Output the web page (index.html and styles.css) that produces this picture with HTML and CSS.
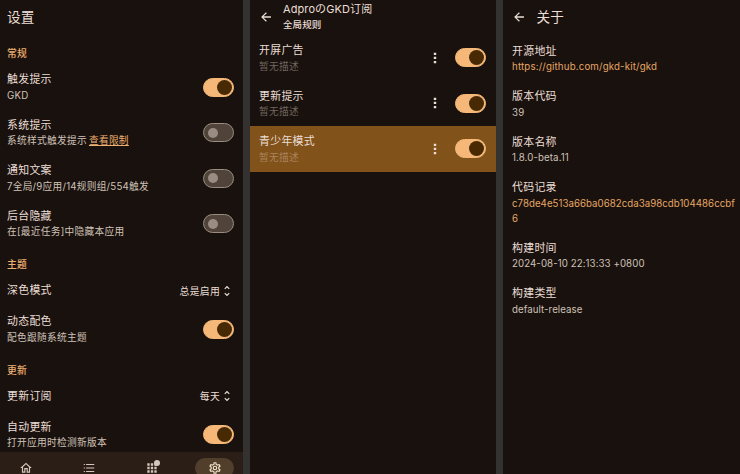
FILE: index.html
```html
<!DOCTYPE html>
<html lang="zh-CN">
<head>
<meta charset="utf-8">
<title>GKD</title>
<link rel="stylesheet" href="styles.css">
</head>
<body>
<svg class="defs" aria-hidden="true">
  <symbol id="back" viewBox="0 0 24 24"><path d="M20.5 10.8H7.8l5.6-5.4L12 3.7 3.7 12l8.3 8.3 1.4-1.7-5.6-5.4h12.7z"/></symbol>
  <symbol id="more" viewBox="0 0 4 12"><path d="M.8.7h2.4v2.3H.8zM.8 4.8h2.4v2.3H.8zM.8 8.9h2.4v2.3H.8z"/></symbol>
  <symbol id="unfold" viewBox="0 0 24 24"><path d="M12 5.83 15.17 9l1.41-1.41L12 3 7.41 7.59 8.83 9zm0 12.34L8.83 15l-1.41 1.41L12 21l4.59-4.59L15.17 15z"/></symbol>
  <symbol id="home" viewBox="0 0 24 24"><path d="m12 5.69 5 4.5V18h-2v-6H9v6H7v-7.81zM12 3 2 12h3v8h6v-6h2v6h6v-8h3z"/></symbol>
  <symbol id="list" viewBox="0 0 24 24"><path d="M3 5h2v2H3zm0 6h2v2H3zm0 6h2v2H3zM7 5h14v2H7zm0 6h14v2H7zm0 6h14v2H7z"/></symbol>
  <symbol id="apps" viewBox="0 0 24 24"><path d="M4 4h4v4H4zm6 0h4v4h-4zm6 0h4v4h-4zM4 10h4v4H4zm6 0h4v4h-4zm6 0h4v4h-4zM4 16h4v4H4zm6 0h4v4h-4zm6 0h4v4h-4z"/></symbol>
  <symbol id="gear" viewBox="0 0 24 24"><path d="M19.43 12.98c.04-.32.07-.64.07-.98s-.03-.66-.07-.98l2.11-1.65c.19-.15.24-.42.12-.64l-2-3.46c-.09-.16-.26-.25-.44-.25-.06 0-.12.01-.17.03l-2.49 1c-.52-.4-1.08-.73-1.69-.98l-.38-2.65C14.46 2.18 14.25 2 14 2h-4c-.25 0-.46.18-.49.42l-.38 2.65c-.61.25-1.17.59-1.69.98l-2.49-1c-.06-.02-.12-.03-.18-.03-.17 0-.34.09-.43.25l-2 3.46c-.13.22-.07.49.12.64l2.11 1.65c-.04.32-.07.65-.07.98s.03.66.07.98l-2.11 1.65c-.19.15-.24.42-.12.64l2 3.46c.09.16.26.25.44.25.06 0 .12-.01.17-.03l2.49-1c.52.4 1.08.73 1.69.98l.38 2.65c.03.24.24.42.49.42h4c.25 0 .46-.18.49-.42l.38-2.65c.61-.25 1.17-.59 1.69-.98l2.49 1c.06.02.12.03.18.03.17 0 .34-.09.43-.25l2-3.46c.12-.22.07-.49-.12-.64zm-1.98-1.71c.04.31.05.52.05.73s-.02.43-.05.73l-.14 1.13.89.7 1.08.84-.7 1.21-1.27-.51-1.04-.42-.9.68c-.43.32-.84.56-1.25.73l-1.06.43-.16 1.13-.2 1.35h-1.4l-.35-2.48-1.06-.43c-.43-.18-.83-.41-1.23-.71l-.91-.7-1.06.43-1.27.51-.7-1.21 1.97-1.54-.14-1.13c-.03-.31-.05-.54-.05-.74s.02-.43.05-.73l.14-1.13-1.97-1.54.7-1.21 1.27.51 1.04.42.9-.68c.43-.32.84-.56 1.25-.73l1.06-.43.36-2.48h1.39l.35 2.48 1.06.43c.43.18.83.41 1.23.71l.91.7 1.06-.43 1.27-.51.7 1.21-1.96 1.54zM12 8a4 4 0 1 0 0 8 4 4 0 0 0 0-8zm0 6a2 2 0 1 1 0-4 2 2 0 0 1 0 4z"/></symbol>
</svg>
<main class="screens">
  <section class="screen settings">
    <header class="bar"><h1>设置</h1></header>
    <div class="content">
      <h2>常规</h2>
      <div class="row"><div class="text"><p class="name">触发提示</p><p class="desc">GKD</p></div><span class="switch on"></span></div>
      <div class="row"><div class="text"><p class="name">系统提示</p><p class="desc">系统样式触发提示<a class="limit">查看限制</a></p></div><span class="switch"></span></div>
      <div class="row"><div class="text"><p class="name">通知文案</p><p class="desc stats">7全局/9应用/14规则组/554触发</p></div><span class="switch"></span></div>
      <div class="row"><div class="text"><p class="name">后台隐藏</p><p class="desc">在[最近任务]中隐藏本应用</p></div><span class="switch"></span></div>
      <h2>主题</h2>
      <div class="row single"><p class="name">深色模式</p><span class="choice">总是启用<svg><use href="#unfold"/></svg></span></div>
      <div class="row"><div class="text"><p class="name">动态配色</p><p class="desc">配色跟随系统主题</p></div><span class="switch on"></span></div>
      <h2>更新</h2>
      <div class="row single"><p class="name">更新订阅</p><span class="choice">每天<svg><use href="#unfold"/></svg></span></div>
      <div class="row"><div class="text"><p class="name">自动更新</p><p class="desc">打开应用时检测新版本</p></div><span class="switch on"></span></div>
    </div>
    <nav class="nav">
      <span class="tab"><svg><use href="#home"/></svg></span>
      <span class="tab"><svg><use href="#list"/></svg></span>
      <span class="tab"><svg><use href="#apps"/></svg><i class="badge"></i></span>
      <span class="tab active"><svg><use href="#gear"/></svg></span>
    </nav>
  </section>
  <section class="screen rules">
    <header class="bar"><svg class="back"><use href="#back"/></svg><div class="heading"><h1>AdproのGKD订阅</h1><p>全局规则</p></div></header>
    <div class="row"><div class="text"><p class="name">开屏广告</p><p class="desc">暂无描述</p></div><svg class="more"><use href="#more"/></svg><span class="switch on"></span></div>
    <div class="row"><div class="text"><p class="name">更新提示</p><p class="desc">暂无描述</p></div><svg class="more"><use href="#more"/></svg><span class="switch on"></span></div>
    <div class="row selected"><div class="text"><p class="name">青少年模式</p><p class="desc">暂无描述</p></div><svg class="more"><use href="#more"/></svg><span class="switch on"></span></div>
  </section>
  <section class="screen about">
    <header class="bar"><svg class="back"><use href="#back"/></svg><h1>关于</h1></header>
    <div class="item"><p class="name">开源地址</p><p class="desc link url">https://github.com/gkd-kit/gkd</p></div>
    <div class="item"><p class="name">版本代码</p><p class="desc">39</p></div>
    <div class="item"><p class="name">版本名称</p><p class="desc version">1.8.0-beta.11</p></div>
    <div class="item"><p class="name">代码记录</p><p class="desc link hash">c78de4e513a66ba0682cda3a98cdb104486ccbf6</p></div>
    <div class="item"><p class="name">构建时间</p><p class="desc time">2024-08-10 22:13:33 +0800</p></div>
    <div class="item"><p class="name">构建类型</p><p class="desc build">default-release</p></div>
  </section>
</main>
</body>
</html>
```
FILE: styles.css
```css
* { box-sizing: border-box; }
body {
  margin: 0;
  background: #333231;
  color: #eaded6;
  font-family: Inter, "Noto Sans CJK SC", sans-serif;
  overflow: hidden;
}
h1, h2, p { margin: 0; font-weight: 400; white-space: nowrap; }
svg { fill: currentColor; flex: none; }
.defs { position: absolute; width: 0; height: 0; }
.screens {
  display: grid;
  grid-template-columns: 243px 246px 237px;
  column-gap: 7px;
  height: 474px;
}
.screen { background: #19110d; display: flex; flex-direction: column; min-width: 0; overflow: hidden; }
.bar { display: flex; align-items: center; height: 35px; flex: none; padding: 0 7px 2px; }
.settings .bar { height: 35.3px; }
h1 { font-size: 13.6px; line-height: 20px; letter-spacing: .2px; }
h2 { height: 29px; padding: 11px 7px 0; color: #eeb071; font-size: 9.8px; line-height: 15px; letter-spacing: .2px; font-weight: 500; }
.content { flex: 1; min-height: 0; overflow: hidden; }
.row { display: flex; align-items: center; height: 45.5px; padding: 0 9px 0 7px; flex: none; }
.row.single { height: 31px; }
.text, .row.single .name { flex: 1; }
.text { padding-top: 1px; }
.name { font-size: 10.9px; line-height: 15.5px; letter-spacing: .3px; }
.desc { font-size: 9.7px; line-height: 15px; letter-spacing: .3px; color: #cfc2b8; }
.limit { color: #eeb071; text-decoration: underline; margin-left: 2px; }
.stats { letter-spacing: .24px; }
.switch {
  width: 31px; height: 19px; border-radius: 10px; flex: none;
  border: 1px solid #9a8c80; background: #50443a;
  display: flex; align-items: center; padding-left: 4px;
}
.switch::before { content: ""; width: 10px; height: 10px; border-radius: 50%; background: #9a8c80; }
.switch.on { background: #f5b878; border-color: #f5b878; padding-left: 13px; }
.switch.on::before { width: 15px; height: 15px; background: #472a04; }
.choice { display: flex; align-items: center; font-size: 9.8px; letter-spacing: .3px; }
.choice svg { width: 14px; height: 14px; }
.nav { display: flex; align-items: flex-start; height: 22px; background: #2b1e16; padding: 6px 7px 0 6px; gap: 24px; flex: none; }
.tab { position: relative; width: 39px; height: 20px; display: flex; align-items: center; justify-content: center; color: #d5c7bb; }
.tab svg { width: 14px; height: 14px; }
.tab.active { background: #513f2c; border-radius: 10px; color: #f5dfca; }
.badge { position: absolute; left: 22px; top: 2px; width: 6px; height: 6px; border-radius: 50%; background: #d5c7bb; }
.back { width: 14px; height: 14px; }
.rules .bar { padding: 0 9px 2px; }
.rules .heading { margin-left: 10px; padding-top: 1px; }
.rules h1 { font-size: 11px; line-height: 15px; letter-spacing: .1px; }
.rules .heading p { font-size: 9.5px; line-height: 15px; letter-spacing: .1px; font-weight: 500; }
.rules .row { padding: 0 10px 0 9px; }
.rules .desc { color: #70655d; }
.rules .selected { background: #81521a; }
.rules .selected .desc { color: #aa835a; }
.more { width: 4px; height: 12px; margin-right: 18px; }
.about .bar { padding-left: 9px; }
.about h1 { margin-left: 10.5px; }
.item { padding: 8.5px 0 6.5px 9px; }
.item .desc { word-break: break-all; white-space: normal; }
.about .link { color: #e5a765; }
.about .url { letter-spacing: .16px; }
.about .hash { letter-spacing: .03px; }
.about .time { letter-spacing: .08px; }
.about .version { letter-spacing: .1px; }
.about .build { letter-spacing: .06px; }
```
